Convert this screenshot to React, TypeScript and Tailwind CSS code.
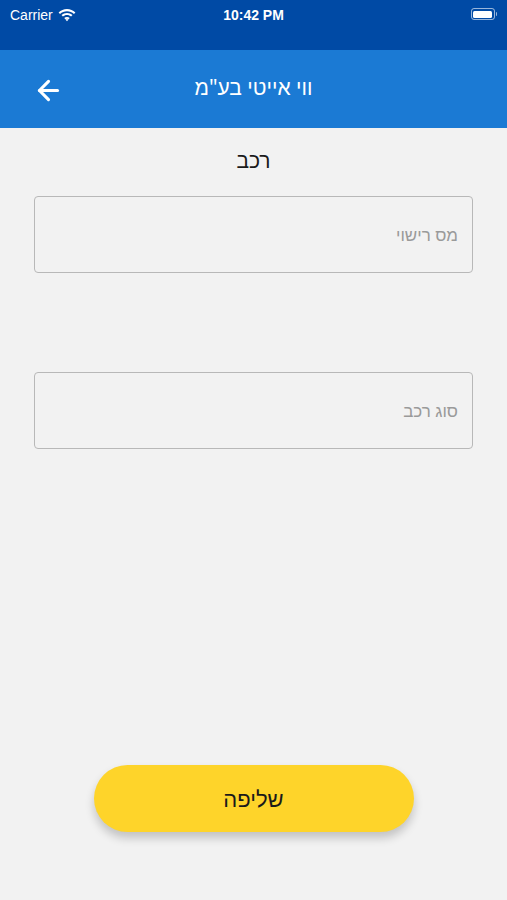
import { ArrowLeft } from 'lucide-react'

function Wifi() {
  return (
    <svg width="18" height="13" viewBox="0 0 18 13" fill="white">
      <path d="M9 2.2c2.7 0 5.1 1 7 2.7l1.4-1.5C15.1 1.3 12.2 0 9 0S2.9 1.3.6 3.4L2 4.9c1.9-1.7 4.3-2.7 7-2.7z" />
      <path d="M9 6.1c1.6 0 3 .6 4.1 1.5l1.4-1.5C13 4.8 11.1 4 9 4s-4 .8-5.5 2.1l1.4 1.5C6 6.7 7.4 6.1 9 6.1z" />
      <path d="M9 9.9c.6 0 1.2.2 1.6.6L9 12.3l-1.6-1.8c.4-.4 1-.6 1.6-.6z" />
      <path d="M9 7.9c1.1 0 2 .4 2.8 1l-1.3 1.4A2.4 2.4 0 0 0 9 9.8c-.6 0-1.1.2-1.5.5L6.2 8.9c.8-.6 1.7-1 2.8-1z" />
    </svg>
  )
}

function Battery() {
  return (
    <div className="flex items-center">
      <div className="w-[24px] h-[12px] rounded-[3px] border border-white/60 p-[1.5px]">
        <div className="w-full h-full rounded-[1.5px] bg-white" />
      </div>
      <div className="w-[1.5px] h-[4px] bg-white/60 rounded-r-sm ml-[1px]" />
    </div>
  )
}

function Field({ label }: { label: string }) {
  return (
    <div className="h-[77px] rounded-[4px] border border-[#b8b8b8] flex items-center justify-end px-[14px]">
      <span dir="rtl" className="text-[17px] text-[#9a9a9a]">{label}</span>
    </div>
  )
}

export default function App() {
  return (
    <div className="w-[507px] h-[900px] bg-[#f2f2f2] flex flex-col font-['Noto_Sans','Liberation_Sans',sans-serif]">
      {/* status bar */}
      <div className="h-[50px] bg-[#004aa5] relative text-white">
        <div className="absolute left-[10px] top-[5px] flex items-center gap-[5px] text-[14px] font-['Liberation_Sans',sans-serif]">
          <span>Carrier</span>
          <Wifi />
        </div>
        <div className="absolute left-0 right-0 top-[5px] text-center text-[14px] font-semibold font-['Liberation_Sans',sans-serif]">
          10:42 PM
        </div>
        <div className="absolute right-[10px] top-[8px]">
          <Battery />
        </div>
      </div>

      {/* header */}
      <div className="h-[78px] bg-[#1b7ad4] relative flex items-center justify-center">
        <ArrowLeft className="absolute left-[33px] top-[25px] text-white" size={31} strokeWidth={2.4} />
        <h1 dir="rtl" className="text-white text-[21px] mt-[-2px]">ווי אייטי בע"מ</h1>
      </div>

      {/* content */}
      <div className="flex-1 flex flex-col px-[34px] pt-[17px]">
        <div dir="rtl" className="text-center text-[21px] text-[#1a1a1a] leading-[30px]">רכב</div>
        <div className="mt-[21px] flex flex-col">
          <Field label="מס רישוי" />
          <div className="mt-[99px]">
            <Field label="סוג רכב" />
          </div>
        </div>
      </div>

      <div className="flex justify-center pb-[68px]">
        <button className="w-[320px] h-[67px] rounded-full bg-[#fed42a] shadow-[0_6px_10px_rgba(0,0,0,0.2)] text-[22px] text-[#1a1a1a]">
          <span dir="rtl">שליפה</span>
        </button>
      </div>
    </div>
  )
}
